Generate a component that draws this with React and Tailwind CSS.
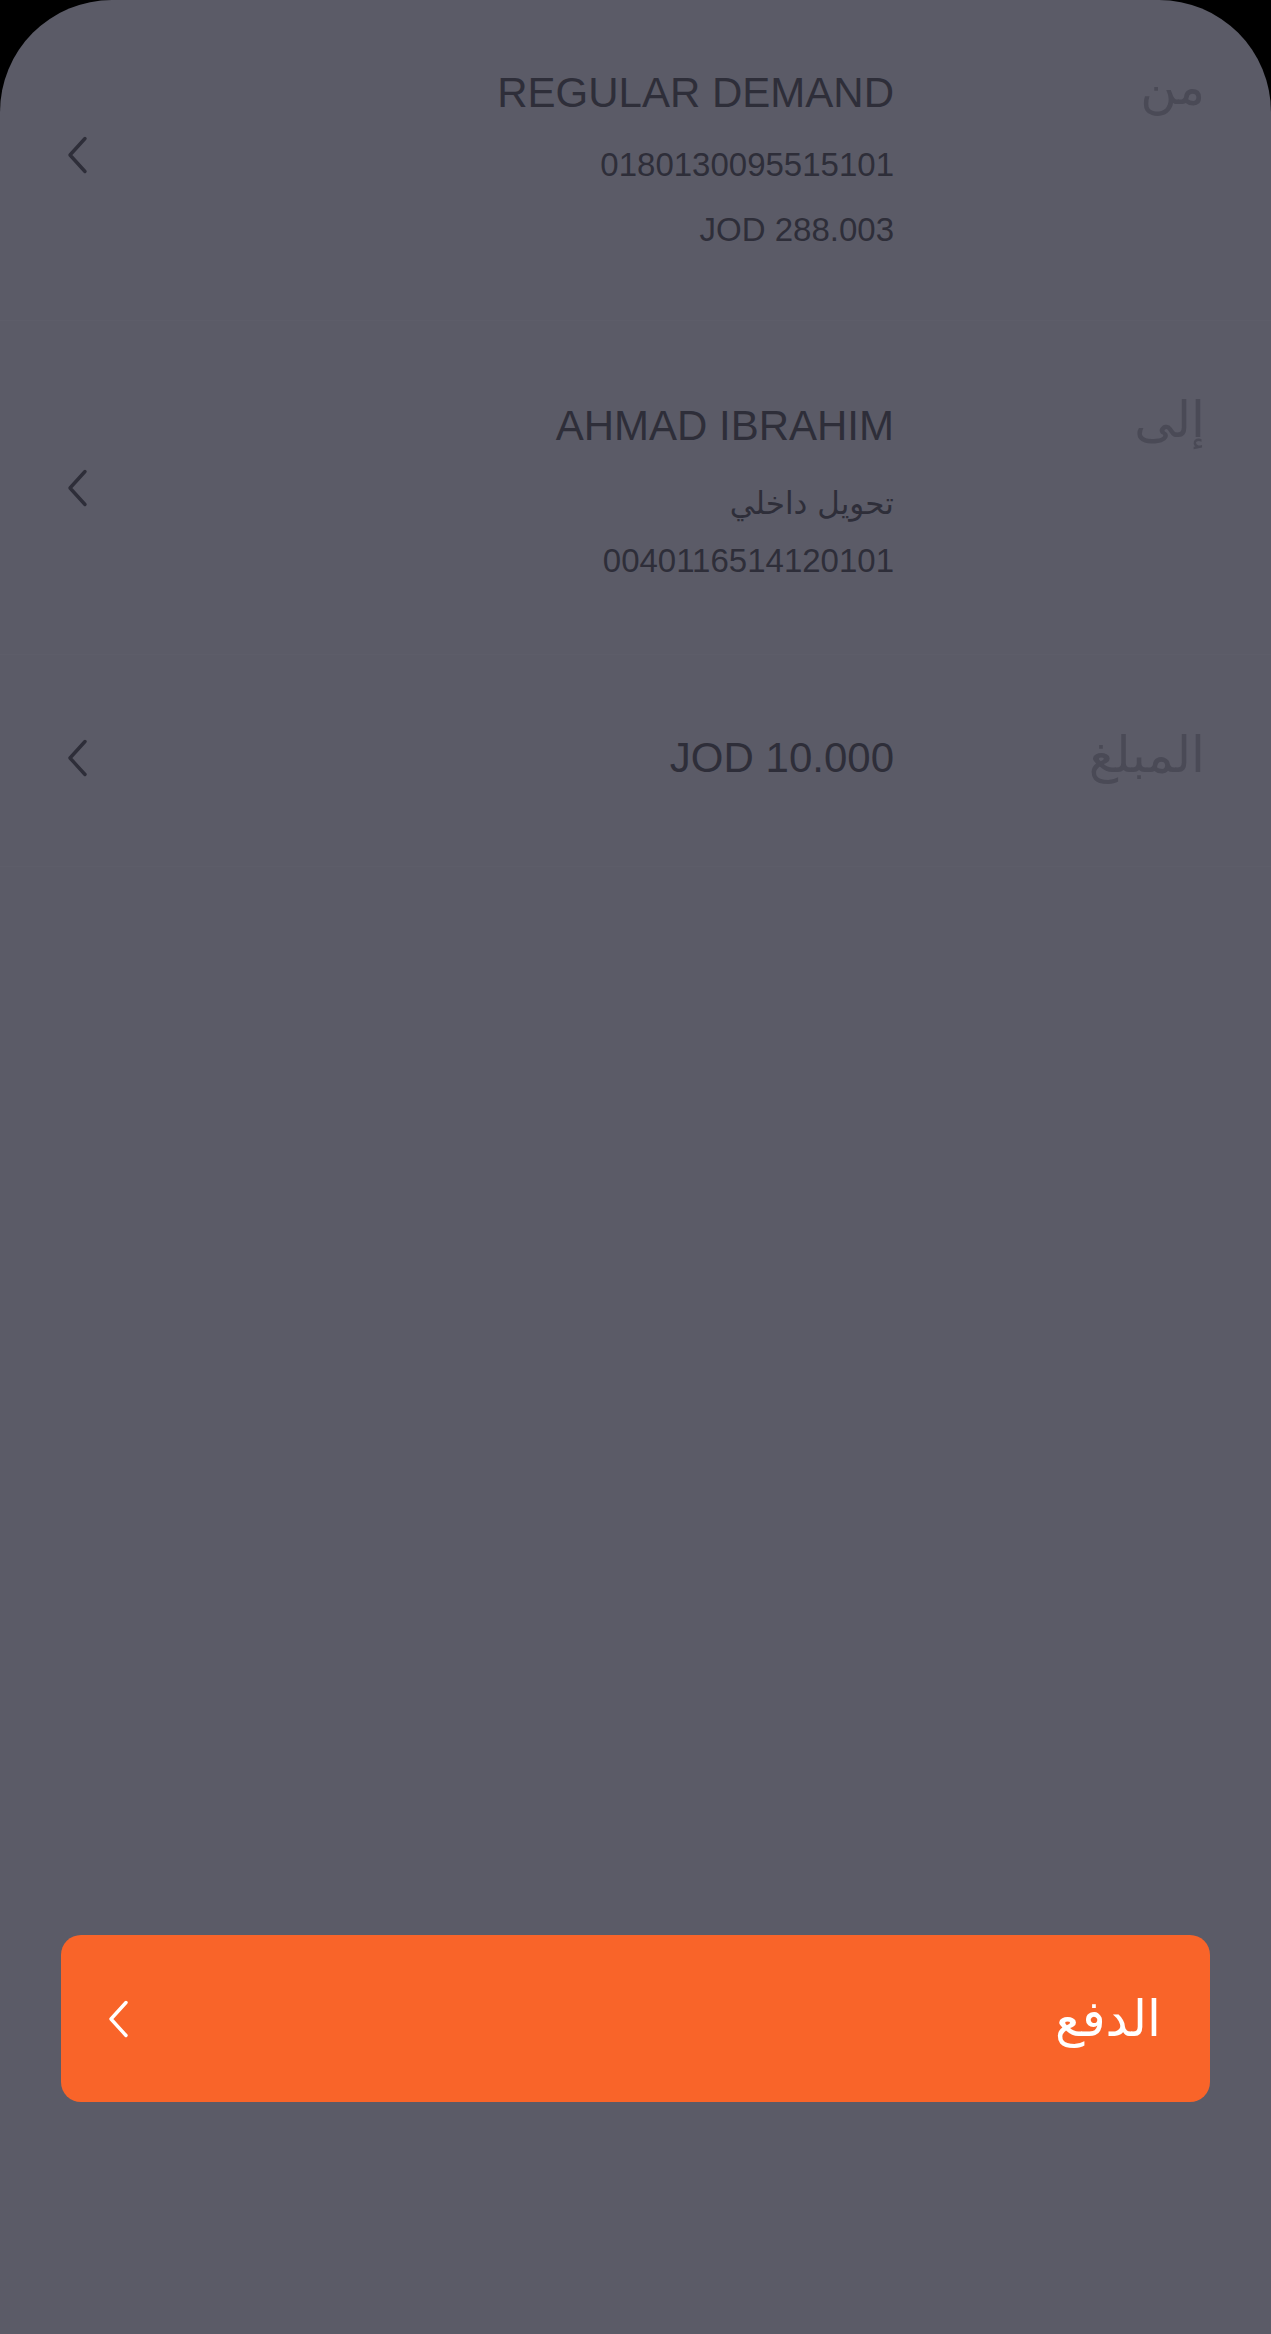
const Chevron = ({ className = "" }) => (
  <svg width="22" height="38" viewBox="0 0 22 38" fill="none" className={className}>
    <path d="M19 2.5 L4 19 L19 35.5" stroke="currentColor" strokeWidth="3.4" strokeLinecap="round" strokeLinejoin="round" />
  </svg>
);

const latin = { fontFamily: '"Liberation Sans", Arial, sans-serif' };
const arabic = { fontFamily: '"DejaVu Sans", "Noto Sans", sans-serif' };

const Label = ({ children }) => (
  <div className="w-[311px] shrink-0 -mt-[6px] text-right text-[50px] leading-[50px] text-[#4a4a56]" style={arabic}>
    {children}
  </div>
);

export default function App() {
  return (
    <div className="w-[1271px] h-[2334px] bg-black">
      <div className="flex flex-col h-full bg-[#5b5b67] rounded-t-[112px]" style={latin}>
        {/* from */}
        <div className="flex items-start px-[66px] pt-[68px] pb-[58px] border-b border-[#5d5d69]">
          <Chevron className="mt-[68px] text-[#2e2e39]" />
          <div className="flex-1 flex flex-col items-end text-[#2e2e39]">
            <div className="text-[42px] leading-[50px]">REGULAR DEMAND</div>
            <div className="mt-[14px] text-[33px] leading-[65px]">0180130095515101</div>
            <div className="text-[33px] leading-[65px]">JOD 288.003</div>
          </div>
          <Label>من</Label>
        </div>

        {/* to */}
        <div className="flex items-start px-[66px] pt-[80px] pb-[61px] border-b border-[#5d5d69]">
          <Chevron className="mt-[68px] text-[#2e2e39]" />
          <div className="flex-1 flex flex-col items-end text-[#2e2e39]">
            <div className="text-[42px] leading-[50px]">AHMAD IBRAHIM</div>
            <div className="pt-[28px] text-[31px] leading-[49px]" style={arabic}>تحويل داخلي</div>
            <div className="text-[33px] leading-[65px]">0040116514120101</div>
          </div>
          <Label>إلى</Label>
        </div>

        {/* amount */}
        <div className="flex items-center px-[66px] pt-[78px] pb-[83px] border-b border-[#5d5d69]">
          <Chevron className="text-[#2e2e39]" />
          <div className="flex-1 text-right text-[42px] leading-[50px] text-[#2e2e39]">JOD 10.000</div>
          <Label>المبلغ</Label>
        </div>

        <div className="flex-1" />

        <div className="mx-[61px] mb-[232px] h-[167px] rounded-[20px] bg-[#f96429] flex items-center justify-between pl-[46px] pr-[49px] text-white">
          <Chevron className="text-white" />
          <div className="text-[50px] leading-[56px]" style={arabic}>الدفع</div>
        </div>
      </div>
    </div>
  );
}
